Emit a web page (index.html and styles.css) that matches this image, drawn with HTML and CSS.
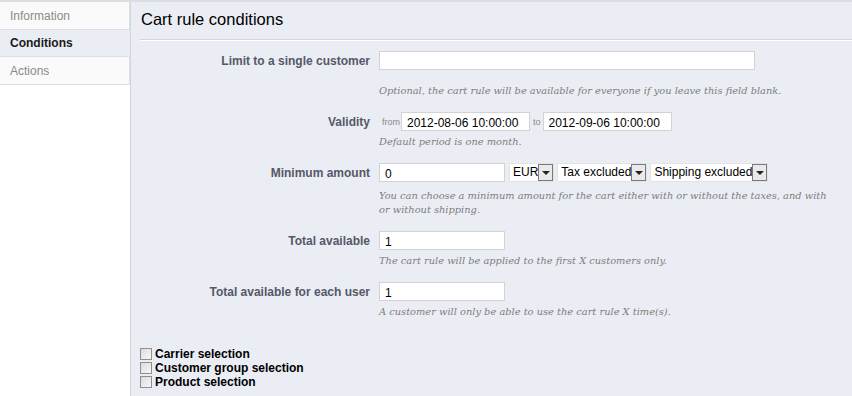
FILE: index.html
```html
<!DOCTYPE html>
<html lang="en">
<head>
    <meta charset="UTF-8">
    <title>Cart rule conditions</title>
    <link rel="stylesheet" href="styles.css">
</head>
<body>
    <div class="page">
        <ul class="tabs">
            <li>Information</li>
            <li class="active">Conditions</li>
            <li>Actions</li>
        </ul>

        <div class="panel">
            <h2 class="title">Cart rule conditions</h2>

            <div class="row first">
                <label class="label">Limit to a single customer</label>
                <div class="field">
                    <input type="text" class="text wide">
                    <p class="help gap">Optional, the cart rule will be available for everyone if you leave this field blank.</p>
                </div>
            </div>

            <div class="row">
                <label class="label">Validity</label>
                <div class="field">
                    <div class="inline">
                        <span class="small from">from</span>
                        <input type="text" class="text date" value="2012-08-06 10:00:00">
                        <span class="small to">to</span>
                        <input type="text" class="text date" value="2012-09-06 10:00:00">
                    </div>
                    <p class="help">Default period is one month.</p>
                </div>
            </div>

            <div class="row">
                <label class="label">Minimum amount</label>
                <div class="field">
                    <div class="inline selects">
                        <input type="text" class="text short" value="0">
                        <span class="select currency"><span class="value">EUR</span><span class="arrow"></span></span>
                        <span class="select"><span class="value">Tax excluded</span><span class="arrow"></span></span>
                        <span class="select"><span class="value">Shipping excluded</span><span class="arrow"></span></span>
                    </div>
                    <p class="help lower">You can choose a minimum amount for the cart either with or without the taxes, and with or without shipping.</p>
                </div>
            </div>

            <div class="row">
                <label class="label">Total available</label>
                <div class="field">
                    <input type="text" class="text short" value="1">
                    <p class="help">The cart rule will be applied to the first X customers only.</p>
                </div>
            </div>

            <div class="row">
                <label class="label">Total available for each user</label>
                <div class="field">
                    <input type="text" class="text short" value="1">
                    <p class="help">A customer will only be able to use the cart rule X time(s).</p>
                </div>
            </div>

            <div class="checks">
                <label class="check"><span class="box"></span>Carrier selection</label>
                <label class="check"><span class="box"></span>Customer group selection</label>
                <label class="check"><span class="box"></span>Product selection</label>
            </div>
        </div>
    </div>
</body>
</html>
```

FILE: styles.css
```css
*{
    box-sizing: border-box;
}
body{
    margin: 0;
    background: #fff;
    font-family: "Liberation Sans", Arial, sans-serif;
    font-size: 12px;
    color: #000;
}
.page{
    display: flex;
    height: 396px;
    border-top: 2px solid #dcdde3;
}

/* left tabs */
.tabs{
    list-style: none;
    margin: 0;
    padding: 0;
    width: 130px;
    flex-shrink: 0;
}
.tabs li{
    height: 28px;
    line-height: 28px;
    padding-left: 10px;
    color: #8a8a8a;
    background: #fafafa;
    border: 1px solid #dedfe5;
    border-top: none;
    border-left: none;
}
.tabs li.active{
    height: 27px;
    line-height: 27px;
    background: #ebedf4;
    color: #1a1a1a;
    font-weight: bold;
    border-right-color: #ebedf4;
}

/* main panel */
.panel{
    flex: 1;
    background: #ebedf4;
    border-left: 1px solid #d3d5dc;
    padding: 0 0 0 9px;
}
.title{
    margin: 0;
    padding: 8px 0 10px 1px;
    font-size: 16.5px;
    font-weight: normal;
    color: #000;
    border-bottom: 1px solid #d4d6dc;
    box-shadow: 0 1px 0 #fff;
}

.row{
    display: flex;
    margin-bottom: 14px;
}
.row.first{
    margin-top: 11px;
}
.label{
    width: 239px;
    flex-shrink: 0;
    text-align: right;
    padding-right: 9px;
    padding-top: 2px;
    font-weight: bold;
    color: #555868;
    line-height: 16px;
}
.field{
    flex: 1;
    padding-right: 20px;
}
.inline{
    display: flex;
    align-items: center;
}
.selects{
    gap: 3px;
}

.text{
    height: 19px;
    border: 1px solid #d3d3d3;
    background: #fff;
    font-family: "Liberation Sans", Arial, sans-serif;
    font-size: 12px;
    color: #000;
    padding: 2px 5px 0;
    margin: 0;
    outline: none;
}
.wide{
    width: 376px;
}
.short{
    width: 126px;
}
.date{
    width: 129px;
}
.small{
    font-size: 9px;
    color: #8a8a8a;
}
.from{
    margin: 0 1px 0 3px;
}
.to{
    margin: 0 2px 0 3px;
}

.select{
    display: inline-flex;
    align-items: center;
    height: 19px;
    background: #fff;
    border: 1px solid #e3e3e3;
    padding-left: 3px;
    font-size: 12px;
    line-height: 17px;
}
.select .value{
    white-space: nowrap;
}
.currency{
    margin-left: 1px;
}
.arrow{
    width: 15px;
    height: 17px;
    flex-shrink: 0;
    border: 1px solid #7a7a7a;
    background: #e9e9e9;
    position: relative;
}
.arrow::after{
    content: "";
    position: absolute;
    left: 3px;
    top: 6px;
    border-left: 4px solid transparent;
    border-right: 4px solid transparent;
    border-top: 4px solid #222;
}

.help{
    margin: 4px 0 0;
    font-family: "DejaVu Serif", Georgia, serif;
    font-style: italic;
    font-size: 9.85px;
    line-height: 14px;
    color: #7d7d7d;
}
.help.gap{
    margin-top: 14px;
}
.help.lower{
    margin-top: 7px;
}

.checks{
    margin-top: 28px;
    display: flex;
    flex-direction: column;
}
.check{
    display: flex;
    align-items: center;
    height: 14px;
    font-weight: bold;
    color: #000;
}
.box{
    width: 12px;
    height: 12px;
    border: 1px solid #8f8f8f;
    background: linear-gradient(135deg, #dcdcdc, #f7f7f7);
    margin-right: 3px;
}
```
